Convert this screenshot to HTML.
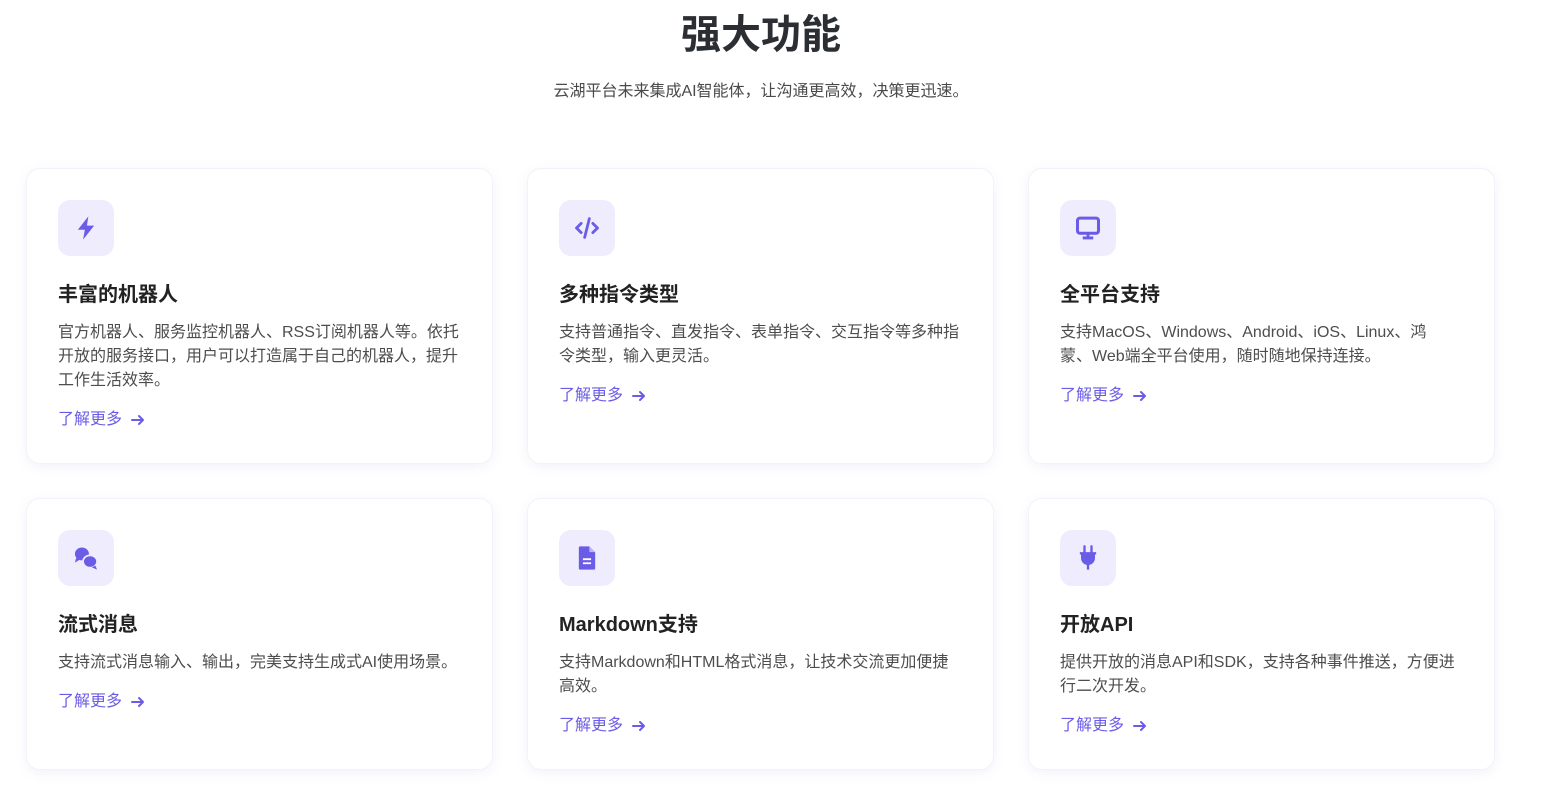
<!DOCTYPE html>
<html><head><meta charset="utf-8"><style>
*{margin:0;padding:0;box-sizing:border-box}
body{width:1548px;height:801px;background:#fff;font-family:"Liberation Sans","Noto Sans CJK SC",sans-serif;position:relative;overflow:hidden;color:#333}
h1{position:absolute;left:561px;width:400px;top:9px;text-align:center;font-size:40px;line-height:52px;font-weight:700;color:#2b2f33}
.sub{position:absolute;left:461px;width:600px;top:80px;text-align:center;font-size:16px;line-height:24px;color:#4a4a4a}
.card{position:absolute;width:467px;background:#fff;border:1px solid #f2f2f8;border-radius:14px;box-shadow:0 3px 12px rgba(120,110,200,0.09);padding:31px 31px}
.ic{width:56px;height:56px;border-radius:12px;background:#efedfd;display:flex;align-items:center;justify-content:center}
.ic svg{width:28px;height:28px}
h3{margin-top:25px;font-size:20px;line-height:28px;font-weight:700;color:#222}
p{margin-top:12px;font-size:16px;line-height:24px;color:#4d4d4d}
a{display:flex;align-items:center;margin-top:15px;font-size:16px;line-height:24px;color:#6b5ce7;text-decoration:none}
a svg{margin-left:8px;width:16px;height:16px}
</style></head><body>
<h1>强大功能</h1>
<div class="sub">云湖平台未来集成AI智能体，让沟通更高效，决策更迅速。</div>

<div class="card" style="left:26px;top:168px;height:296px">
<div class="ic"><svg viewBox="0 0 24 24"><path d="M14 2 5 13.5h6L9.5 22 19 10h-6.2L14 2z" fill="#6b5ce7"/></svg></div>
<h3>丰富的机器人</h3>
<p>官方机器人、服务监控机器人、RSS订阅机器人等。依托开放的服务接口，用户可以打造属于自己的机器人，提升工作生活效率。</p>
<a>了解更多<svg viewBox="0 0 16 16"><path d="M2 8h11M9 4l4 4-4 4" stroke="#6b5ce7" stroke-width="2" fill="none" stroke-linecap="round" stroke-linejoin="round"/></svg></a></div>

<div class="card" style="left:527px;top:168px;height:296px">
<div class="ic"><svg viewBox="0 0 24 24"><path d="M7 8 3 12l4 4M17 8l4 4-4 4M14 4l-4 16" stroke="#6b5ce7" stroke-width="2.4" fill="none" stroke-linecap="round" stroke-linejoin="round"/></svg></div>
<h3>多种指令类型</h3>
<p>支持普通指令、直发指令、表单指令、交互指令等多种指令类型，输入更灵活。</p>
<a>了解更多<svg viewBox="0 0 16 16"><path d="M2 8h11M9 4l4 4-4 4" stroke="#6b5ce7" stroke-width="2" fill="none" stroke-linecap="round" stroke-linejoin="round"/></svg></a></div>

<div class="card" style="left:1028px;top:168px;height:296px">
<div class="ic"><svg viewBox="0 0 24 24"><rect x="3" y="3.5" width="18" height="13" rx="2" stroke="#6b5ce7" stroke-width="2.6" fill="none"/><path d="M12 17v3M7.5 20.5h9" stroke="#6b5ce7" stroke-width="2.4"/></svg></div>
<h3>全平台支持</h3>
<p style="width:390px">支持MacOS、Windows、Android、iOS、Linux、鸿蒙、Web端全平台使用，随时随地保持连接。</p>
<a>了解更多<svg viewBox="0 0 16 16"><path d="M2 8h11M9 4l4 4-4 4" stroke="#6b5ce7" stroke-width="2" fill="none" stroke-linecap="round" stroke-linejoin="round"/></svg></a></div>

<div class="card" style="left:26px;top:498px;height:272px">
<div class="ic"><svg viewBox="0 0 24 24"><ellipse cx="8.5" cy="8.5" rx="6" ry="5.5" fill="#6b5ce7"/><path d="M3.5 12 2.5 16l4-2.5z" fill="#6b5ce7"/><ellipse cx="15.5" cy="15" rx="6" ry="5.3" fill="#6b5ce7" stroke="#efedfd" stroke-width="1.5"/><path d="M20 18.5l1.5 3.5-4.5-2z" fill="#6b5ce7"/></svg></div>
<h3>流式消息</h3>
<p>支持流式消息输入、输出，完美支持生成式AI使用场景。</p>
<a>了解更多<svg viewBox="0 0 16 16"><path d="M2 8h11M9 4l4 4-4 4" stroke="#6b5ce7" stroke-width="2" fill="none" stroke-linecap="round" stroke-linejoin="round"/></svg></a></div>

<div class="card" style="left:527px;top:498px;height:272px">
<div class="ic"><svg viewBox="0 0 24 24"><path d="M6 2h8l5 5v14a1 1 0 0 1-1 1H6a1 1 0 0 1-1-1V3a1 1 0 0 1 1-1z" fill="#6b5ce7"/><path d="M14 2v5h5" fill="#efedfd" opacity=".6"/><path d="M8.5 13h7M8.5 16.5h7" stroke="#fff" stroke-width="1.6"/></svg></div>
<h3>Markdown支持</h3>
<p>支持Markdown和HTML格式消息，让技术交流更加便捷高效。</p>
<a>了解更多<svg viewBox="0 0 16 16"><path d="M2 8h11M9 4l4 4-4 4" stroke="#6b5ce7" stroke-width="2" fill="none" stroke-linecap="round" stroke-linejoin="round"/></svg></a></div>

<div class="card" style="left:1028px;top:498px;height:272px">
<div class="ic"><svg viewBox="0 0 24 24"><path d="M9 2v5M15 2v5" stroke="#6b5ce7" stroke-width="2" stroke-linecap="round"/><path d="M5 7h14v2h-1v3a6 6 0 0 1-12 0V9H5z" fill="#6b5ce7"/><path d="M12 17v5" stroke="#6b5ce7" stroke-width="2"/></svg></div>
<h3>开放API</h3>
<p>提供开放的消息API和SDK，支持各种事件推送，方便进行二次开发。</p>
<a>了解更多<svg viewBox="0 0 16 16"><path d="M2 8h11M9 4l4 4-4 4" stroke="#6b5ce7" stroke-width="2" fill="none" stroke-linecap="round" stroke-linejoin="round"/></svg></a></div>
</body></html>
